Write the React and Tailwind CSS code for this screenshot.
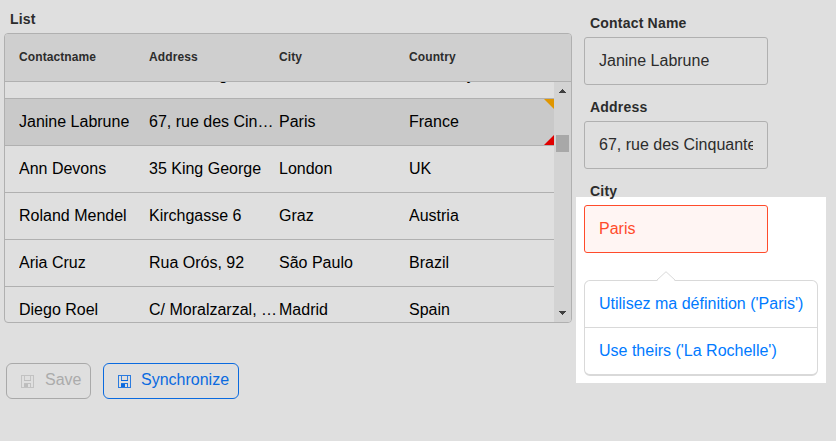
const ROWS = [
  ["Sven Ottlieb", "Walserweg 21", "Aachen", "Germany"],
  ["Janine Labrune", "67, rue des Cinquante Otages", "Paris", "France"],
  ["Ann Devons", "35 King George", "London", "UK"],
  ["Roland Mendel", "Kirchgasse 6", "Graz", "Austria"],
  ["Aria Cruz", "Rua Orós, 92", "São Paulo", "Brazil"],
  ["Diego Roel", "C/ Moralzarzal, …", "Madrid", "Spain"],
];

function DiskIcon() {
  return (
    <svg width="13" height="13" viewBox="0 0 13 13" fill="none" stroke="currentColor" shapeRendering="crispEdges">
      <path d="M.5 .5H12.5V12.5H.5Z" strokeOpacity=".85" />
      <path d="M3.5 1V5M9.5 1V5" strokeOpacity=".8" />
      <path d="M3 5.5H10" />
      <path d="M3 8.5H10M3.5 9V12M9.5 9V12" strokeOpacity=".9" />
      <path d="M3 9H7V12H3Z" fill="currentColor" stroke="none" />
    </svg>
  );
}

function Row({ cells, selected }) {
  return (
    <div
      className={
        "relative flex h-[47px] shrink-0 items-center border-b border-[#b0b0b0] pl-3.5 text-base text-black " +
        (selected ? "bg-[#c9c9c9]" : "")
      }
    >
      {cells.map((c, i) => (
        <div key={i} className="w-[130px] truncate">{c}</div>
      ))}
      {selected && (
        <>
          <svg className="absolute top-0 right-0" width="10" height="10"><path d="M0 0H10V10Z" fill="#e09600" /></svg>
          <svg className="absolute right-0 bottom-0" width="10" height="10"><path d="M10 0V10H0Z" fill="#e00000" /></svg>
        </>
      )}
    </div>
  );
}

function Field({ label, value }) {
  return (
    <div className="flex h-[84px] flex-col pl-2">
      <div className="h-[22px] pl-1.5 text-sm leading-4 font-bold tracking-[0.2px]">{label}</div>
      <div className="flex h-12 w-[184px] items-center rounded-[3px] border border-[#b0b0b0] px-3.5">
        <span className="w-full overflow-hidden whitespace-nowrap">{value}</span>
      </div>
    </div>
  );
}

export default function App() {
  return (
    <div className="flex h-[441px] w-[836px] overflow-hidden bg-[#dfdfdf] font-['Liberation_Sans',Arial,sans-serif] text-[#2c2c2c]">
      <div className="w-[576px] pt-[11px] pl-1">
        <div className="h-[22px] pl-1.5 text-sm leading-4 font-bold tracking-[0.2px]">List</div>
        <div className="flex h-[290px] w-[568px] flex-col overflow-hidden rounded-[4px] border border-[#b0b0b0]">
          <div className="flex h-12 shrink-0 items-center border-b border-[#b0b0b0] bg-[#cfcfcf] pb-0.5 pl-3.5 text-xs font-bold tracking-[0.1px]">
            {["Contactname", "Address", "City", "Country"].map((h) => (
              <div key={h} className="w-[130px]">{h}</div>
            ))}
          </div>
          <div className="flex h-60 overflow-hidden">
            <div className="-mt-[30px] flex w-[549px] flex-col">
              {ROWS.map((r, i) => (
                <Row key={r[0]} cells={r} selected={i === 1} />
              ))}
            </div>
            <div className="flex w-[17px] flex-col items-center bg-[#d3d3d3] pt-[7px]">
              <svg width="7" height="4" shapeRendering="crispEdges"><path d="M3 0H4V1H5V2H6V3H7V4H0V3H1V2H2V1H3Z" fill="#404040" /></svg>
              <div className="mt-[42px] mb-[159px] h-[17px] w-[13px] bg-[#a8a8a8]" />
              <svg width="7" height="4" shapeRendering="crispEdges"><path d="M0 0H7V1H6V2H5V3H4V4H3V3H2V2H1V1H0Z" fill="#404040" /></svg>
            </div>
          </div>
        </div>
        <div className="mt-10 ml-0.5 flex gap-3">
          <div className="flex h-9 w-[85px] rounded-[6px] border border-[#a9a9a9] pt-[5px] pl-[14px] text-[#ababab]">
            <span className="mt-[6px] mr-[11px] text-[#bdbdbd]"><DiskIcon /></span>
            <span className="leading-[22px]">Save</span>
          </div>
          <div className="flex h-9 w-[136px] rounded-[6px] border border-[#0a6adf] pt-[5px] pl-[14px] text-[#0a6adf]">
            <span className="mt-[6px] mr-[10px]"><DiskIcon /></span>
            <span className="leading-[22px]">Synchronize</span>
          </div>
        </div>
      </div>
      <div className="w-[250px] pt-[15px]">
        <Field label="Contact Name" value="Janine Labrune" />
        <Field label="Address" value="67, rue des Cinquante Otages" />
        <div className="relative z-10 h-[14px] pl-[14px] text-sm leading-4 font-bold tracking-[0.2px]">City</div>
        <div className="h-[186px] bg-white px-2 pt-2">
          <div className="flex h-12 w-[184px] items-center rounded-[3px] border border-[#ff4b2b] bg-[#fff5f3] px-3.5 text-[#ff4b2b]">Paris</div>
          <div className="relative mt-[27px] w-[234px] rounded-[6px] border border-b-2 border-[#d9d9d9] text-[#007aff]">
            <svg className="absolute -top-[10px] left-[71px]" width="20" height="11">
              <path d="M1 10L10 1L19 10V11H1Z" fill="white" />
              <path d="M.5 9.5L10 .7L19.5 9.5" fill="none" stroke="#d9d9d9" />
            </svg>
            <div className="flex h-[47px] items-center border-b border-[#d9d9d9] pl-3.5 whitespace-nowrap">Utilisez ma définition ('Paris')</div>
            <div className="flex h-[46px] items-center pl-3.5 whitespace-nowrap">Use theirs ('La Rochelle')</div>
          </div>
        </div>
      </div>
    </div>
  );
}
